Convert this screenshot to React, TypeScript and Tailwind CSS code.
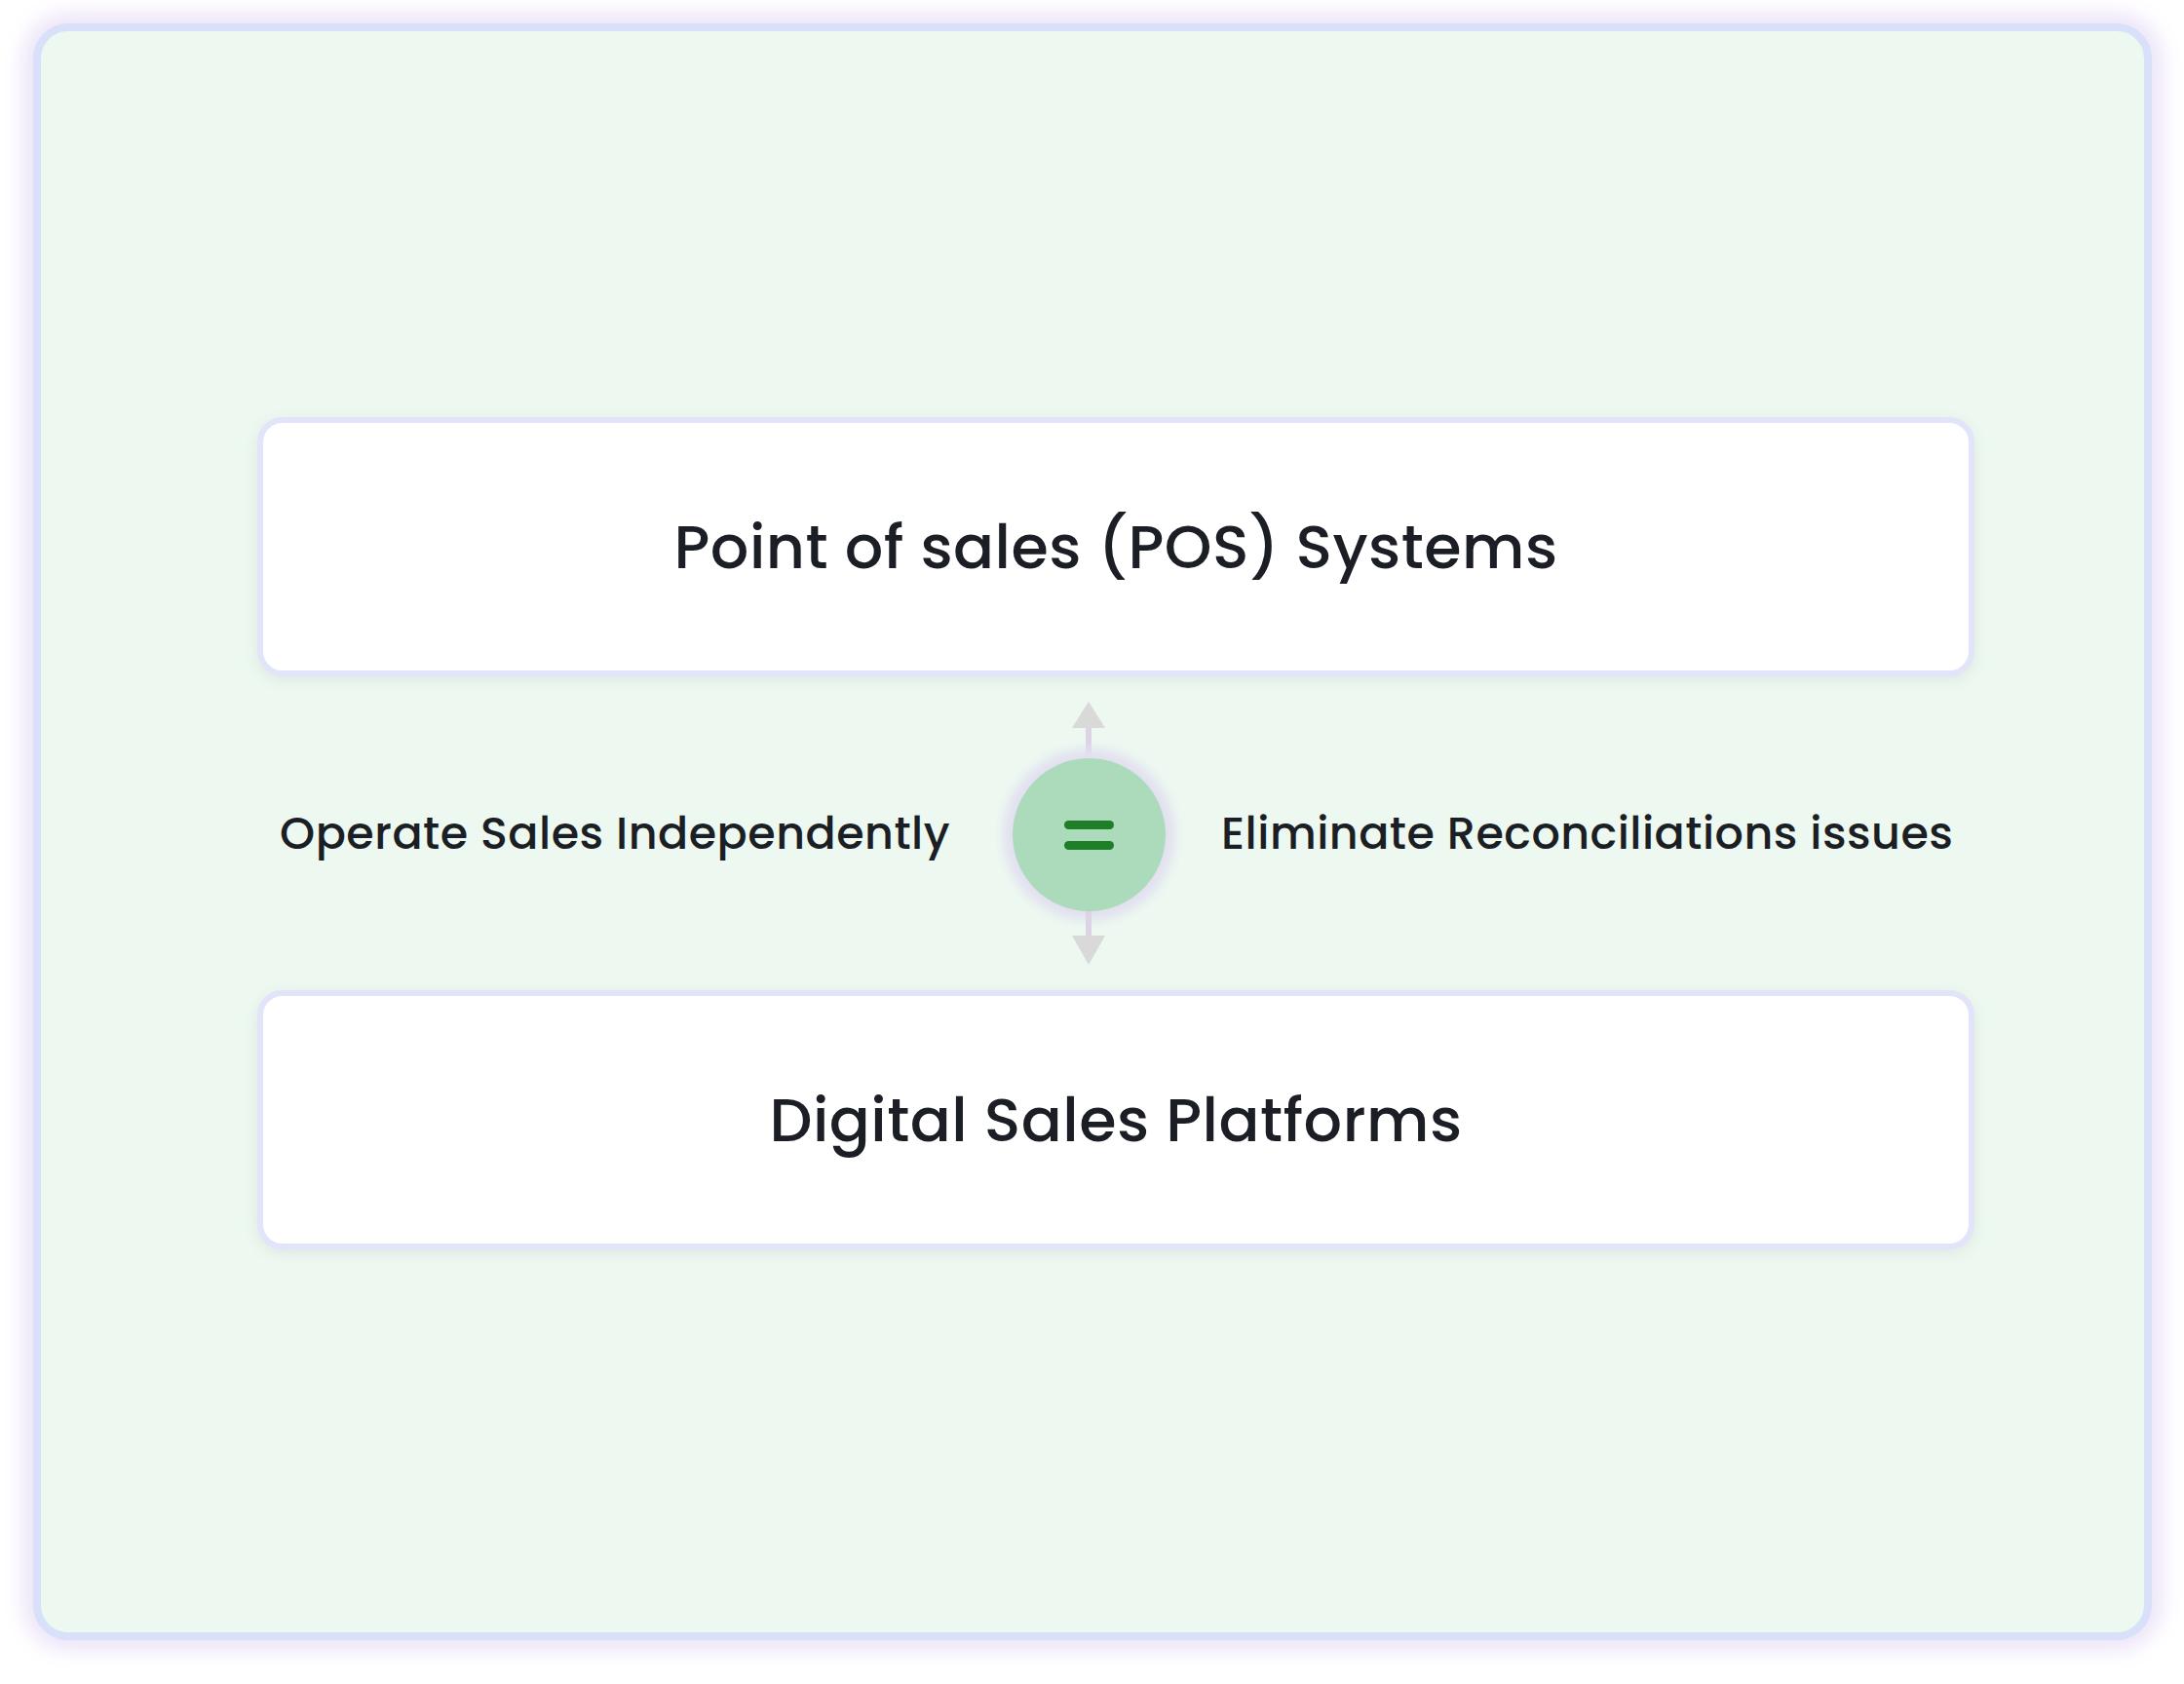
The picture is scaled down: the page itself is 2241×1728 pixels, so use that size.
export default function App() {
  const font = { fontFamily: "Poppins, Inter, 'Noto Sans', sans-serif" };
  return (
    <div className="w-[2241px] h-[1728px] bg-white pl-[34px] pt-[24px]" style={font}>
      <div className="w-[2174px] h-[1659px] rounded-[36px] border-[8px] border-[#d8e0fa] bg-[#ecf8f0] shadow-[0_0_22px_10px_#ece3f8] pl-[222px] pt-[396px]">
        <div className="w-[1762px] flex flex-col">
          <div className="h-[266px] rounded-[26px] border-[6px] border-[#e2e5fa] bg-white shadow-[0_4px_14px_#dfe8e3] flex items-center justify-center text-[62px] font-medium text-[#1b1e24] tracking-[0.5px]">
            Point of sales (POS) Systems
          </div>
          <div className="h-[322px] flex items-center">
            <div className="w-[711px] text-right text-[46px] font-medium text-[#1b1e24] whitespace-nowrap tracking-[0.5px]">Operate Sales Independently</div>
            <div className="w-[200px] ml-[42px] flex flex-col items-center">
              <svg width="34" height="27" viewBox="0 0 34 27"><polygon points="17,0 34,27 0,27" fill="#d9d9d9" /></svg>
              <div className="w-[6px] h-[31px] bg-[#dcd4e4]" />
              <div className="w-[157px] h-[157px] rounded-full bg-[#acdbbc] shadow-[0_0_10px_10px_#e3e1f0] flex flex-col items-center justify-center gap-[12px]">
                <div className="w-[51px] h-[9px] rounded-full bg-[#1f7f28]" />
                <div className="w-[51px] h-[9px] rounded-full bg-[#1f7f28]" />
              </div>
              <div className="w-[6px] h-[25px] bg-[#dcd4e4]" />
              <svg width="34" height="30" viewBox="0 0 34 30"><polygon points="0,0 34,0 17,30" fill="#d9d9d9" /></svg>
            </div>
            <div className="ml-[36px] text-[46px] font-medium text-[#1b1e24] whitespace-nowrap tracking-[0.5px]">Eliminate Reconciliations issues</div>
          </div>
          <div className="h-[266px] rounded-[26px] border-[6px] border-[#e2e5fa] bg-white shadow-[0_4px_14px_#dfe8e3] flex items-center justify-center text-[62px] font-medium text-[#1b1e24] tracking-[0.5px]">
            Digital Sales Platforms
          </div>
        </div>
      </div>
    </div>
  );
}
